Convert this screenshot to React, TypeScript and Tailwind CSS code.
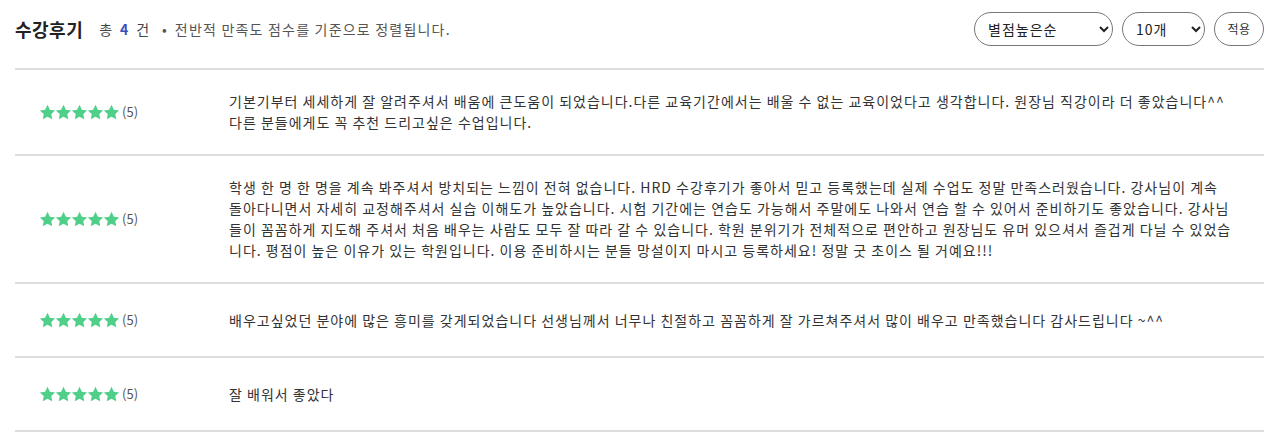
const reviews = [
  {
    score: 5,
    text: '기본기부터 세세하게 잘 알려주셔서 배움에 큰도움이 되었습니다.다른 교육기간에서는 배울 수 없는 교육이었다고 생각합니다. 원장님 직강이라 더 좋았습니다^^\n다른 분들에게도 꼭 추천 드리고싶은 수업입니다.',
  },
  {
    score: 5,
    text: '학생 한 명 한 명을 계속 봐주셔서 방치되는 느낌이 전혀 없습니다. HRD 수강후기가 좋아서 믿고 등록했는데 실제 수업도 정말 만족스러웠습니다. 강사님이 계속\n돌아다니면서 자세히 교정해주셔서 실습 이해도가 높았습니다. 시험 기간에는 연습도 가능해서 주말에도 나와서 연습 할 수 있어서 준비하기도 좋았습니다. 강사님\n들이 꼼꼼하게 지도해 주셔서 처음 배우는 사람도 모두 잘 따라 갈 수 있습니다. 학원 분위기가 전체적으로 편안하고 원장님도 유머 있으셔서 즐겁게 다닐 수 있었습\n니다. 평점이 높은 이유가 있는 학원입니다. 이용 준비하시는 분들 망설이지 마시고 등록하세요! 정말 굿 초이스 될 거예요!!!',
  },
  {
    score: 5,
    text: '배우고싶었던 분야에 많은 흥미를 갖게되었습니다 선생님께서 너무나 친절하고 꼼꼼하게 잘 가르쳐주셔서 많이 배우고 만족했습니다 감사드립니다 ~^^',
  },
  {
    score: 5,
    text: '잘 배워서 좋았다',
  },
]

const Star = () => (
  <svg viewBox="0 0 24 24" className="w-[17px] h-[17px] -mx-[0.6px]" fill="#50cf8b">
    <path d="M12 1.2l3.3 6.8 7.5 1-5.5 5.2 1.4 7.4L12 18l-6.7 3.6 1.4-7.4-5.5-5.2 7.5-1z" />
  </svg>
)

const Stars = ({ score }: { score: number }) => (
  <div className="flex items-center">
    {Array.from({ length: score }).map((_, i) => (
      <Star key={i} />
    ))}
    <span className="ml-[3px] text-[13px] text-[#555]">({score})</span>
  </div>
)

const App = () => {
  return (
    <div
      className="w-[1279px] bg-white text-[#333] px-[15px]"
      style={{ fontFamily: '"Noto Sans CJK KR", "Noto Sans", sans-serif' }}>
      <div className="flex items-center justify-between border-b-2 border-[#ddd] h-[70px] pb-[10px]">
        <div className="flex items-center">
          <h2 className="text-[18px] font-bold text-[#222] leading-none tracking-[0.5px]">수강후기</h2>
          <span className="ml-[16px] text-[14px] text-[#444] tracking-[0.9px]">
            총 <b className="mx-[3px] text-[#3c4fb8] font-bold">4</b> 건
          </span>
          <span className="ml-[12px] text-[14px] text-[#555]">•</span>
          <span className="ml-[8px] text-[14px] text-[#555] tracking-[1.2px]">전반적 만족도 점수를 기준으로 정렬됩니다.</span>
        </div>
        <div className="flex items-center gap-[9px]">
          <select className="w-[139px] h-[34px] rounded-full border border-[#777] px-[9px] text-[14px] tracking-[1px] text-[#222] bg-white">
            <option>별점높은순</option>
          </select>
          <select className="w-[83px] h-[34px] rounded-full border border-[#777] px-[9px] text-[14px] tracking-[1px] text-[#222] bg-white">
            <option>10개</option>
          </select>
          <button className="w-[50px] h-[34px] rounded-full border border-[#777] text-[12px] tracking-[0.5px] text-[#333] bg-white">
            적용
          </button>
        </div>
      </div>
      {reviews.map((review, i) => (
        <div key={i} className="flex items-center border-b-2 border-[#ddd] min-h-[74px] py-[21px]">
          <div className="w-[214px] shrink-0 pl-[25px]">
            <Stars score={review.score} />
          </div>
          <p className="w-[1024px] whitespace-pre-line text-[14px] leading-[21px] tracking-[1px] text-[#333]">{review.text}</p>
        </div>
      ))}
    </div>
  )
}

export default App
